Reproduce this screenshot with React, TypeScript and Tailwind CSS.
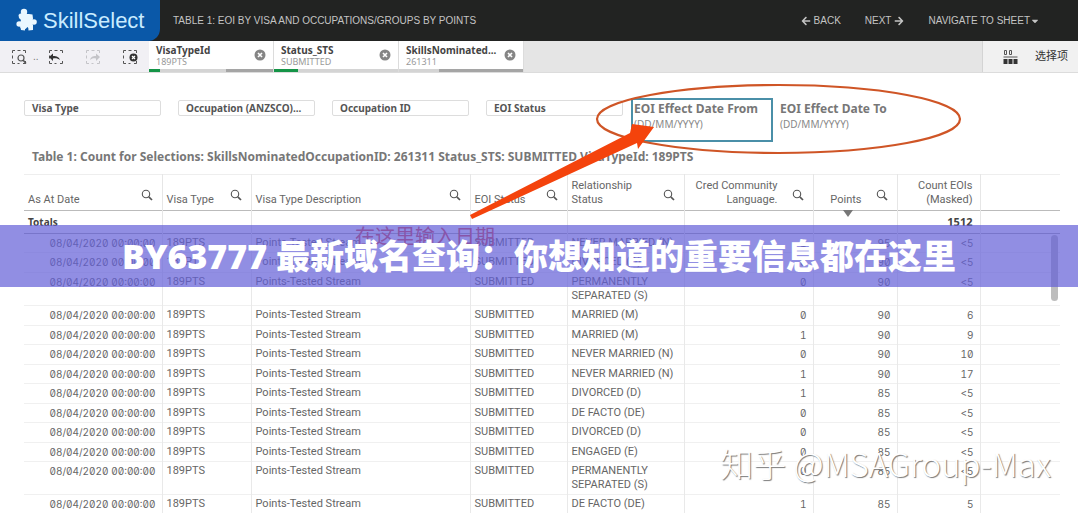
import { FaArrowLeft, FaArrowRight, FaCaretDown } from "react-icons/fa";

const FILTERS = ["Visa Type", "Occupation (ANZSCO)...", "Occupation ID", "EOI Status"];

const CHIPS = [
    { name: "VisaTypeId", value: "189PTS", green: "w-[11px]", light: "w-[66px]" },
    { name: "Status_STS", value: "SUBMITTED", green: "w-6", light: "w-[101px]" },
    { name: "SkillsNominated...", value: "261311", green: "w-0", light: "w-10" },
];

const COLUMNS = [
    { label: "As At Date", width: "w-[138px]", search: true },
    { label: "Visa Type", width: "w-[89px]", search: true },
    { label: "Visa Type Description", width: "w-[219px]", search: true },
    { label: "EOI Status", width: "w-[97px]", search: true },
    { label: "Relationship Status", width: "w-[117px]", search: true },
    { label: "Cred Community Language.", width: "w-[129px]", search: true, right: true },
    { label: "Points", width: "w-[84px]", search: true, right: true, sorted: true },
    { label: "Count EOIs (Masked)", width: "w-[83px]", search: false, right: true },
];

const ROWS = [
    ["NEVER MARRIED (N)", "1", "95", "<5"],
    ["DIVORCED (D)", "0", "90", "<5"],
    ["PERMANENTLY SEPARATED (S)", "0", "90", "<5"],
    ["MARRIED (M)", "0", "90", "6"],
    ["MARRIED (M)", "1", "90", "9"],
    ["NEVER MARRIED (N)", "0", "90", "10"],
    ["NEVER MARRIED (N)", "1", "90", "17"],
    ["DIVORCED (D)", "1", "85", "<5"],
    ["DE FACTO (DE)", "0", "85", "<5"],
    ["DIVORCED (D)", "0", "85", "<5"],
    ["ENGAGED (E)", "0", "85", "<5"],
    ["PERMANENTLY SEPARATED (S)", "0", "85", "<5"],
    ["DE FACTO (DE)", "1", "85", "5"],
];

const NUMERIC = "text-right font-['Inter',sans-serif] text-[10px] [font-feature-settings:'zero','tnum']";

function PuzzleIcon() {
    return (
        <svg viewBox="0 0 22 26" className="h-[26px] w-[22px] shrink-0 fill-[#eaf7ff]" aria-hidden="true">
            <path d="M2.500 7 4 5.500 7 6h6l3.500.5.5 4-.5 3 .5 6-4.500.5-1-1-2 2-5-1-.5-5 1-3-2-2Z" />
            <circle cx="8" cy="4" r="3.200" />
            <circle cx="18" cy="14" r="2.800" />
            <circle cx="3.200" cy="16" r="2.800" />
            <path d="M4 17h5v5.500l-4-.5ZM12 17h5v5l-4.500.5Z" />
        </svg>
    );
}

function SearchIcon() {
    return (
        <svg viewBox="0 0 12 12" className="size-3 fill-none stroke-[#555]" aria-hidden="true">
            <circle cx="5" cy="5" r="3.7" strokeWidth="1.1" />
            <path d="m7.8 7.8 3.2 3.2" strokeWidth="1.7" />
        </svg>
    );
}

function ToolIcon({ kind }: { kind: "search" | "back" | "forward" | "clear" }) {
    return (
        <svg viewBox="0 0 16 16" className={`size-4 fill-none ${kind === "forward" ? "stroke-[#c4c4c8]" : "stroke-[#555]"}`} aria-hidden="true">
            <path d="M1.5 4V1.5H4M6.5 1.5h3M12 1.5h2.500V4M1.500 6.500v3M1.500 12v2.500H4M6.500 14.500h2M12 14.500h2.500V12" />
            {kind === "search" && (
                <>
                    <circle cx="10" cy="9" r="3" strokeWidth="1.200" />
                    <path d="m12 11 3 3.500" strokeWidth="1.500" />
                </>
            )}
            {kind === "back" && <path d="m1 8 4-3.500V7c4 0 6 1 7 4-2-1.500-4-2-7-1.500V12Z" className="fill-[#333] stroke-none" />}
            {kind === "forward" && <path d="m15 8-4-3.500V7c-4 0-5 1-6 4 2-1.500 3-2 6-1.500V12Z" className="fill-[#c4c4c8] stroke-none" />}
            {kind === "clear" && (
                <>
                    <circle cx="11.500" cy="8.500" r="4" className="fill-[#333] stroke-none" />
                    <path d="m10 7 3 3m0-3-3 3" className="stroke-white" strokeWidth="1.200" />
                </>
            )}
        </svg>
    );
}

function ClearIcon() {
    return (
        <svg viewBox="0 0 12 12" className="size-3" aria-hidden="true">
            <circle cx="6" cy="6" r="5.500" fill="#858585" />
            <path d="m4 4 4 4m0-4L4 8" stroke="#fff" strokeWidth="1.600" />
        </svg>
    );
}

function TopBar() {
    return (
        <header className="flex h-[41px] shrink-0 items-stretch bg-[#222322] text-[10px] text-[#c4c4c4]">
            <a href="#home" className="flex w-[160px] items-center gap-[5px] rounded-br-xl bg-[#0a58a8] pl-4 text-[#c9ecff]">
                <PuzzleIcon />
                <span className="text-[22px] leading-6">SkillSelect</span>
            </a>
            <h1 className="flex flex-1 items-center pl-[13px]">TABLE 1: EOI BY VISA AND OCCUPATIONS/GROUPS BY POINTS</h1>
            <nav className="flex items-center gap-6 pr-[38px]">
                <button className="flex items-center gap-[3px]"><FaArrowLeft className="size-2.5" />BACK</button>
                <button className="flex items-center gap-[3px]">NEXT<FaArrowRight className="size-2.5" /></button>
                <button className="flex items-center">NAVIGATE TO SHEET<FaCaretDown className="size-2.5" /></button>
            </nav>
        </header>
    );
}

function SelectionBar() {
    return (
        <div className="flex h-8 shrink-0 border-b border-[#dcdcdc] bg-[#e5e5e5]">
            <div className="flex w-[149px] items-center bg-[#f1f0f4] pl-[11px]">
                <button aria-label="Smart search"><ToolIcon kind="search" /></button>
                <span className="w-[21px] pl-1.5 text-[10px] text-[#777]">..</span>
                <button aria-label="Step back"><ToolIcon kind="back" /></button>
                <button className="ml-[21px]" aria-label="Step forward"><ToolIcon kind="forward" /></button>
                <button className="ml-[21px]" aria-label="Clear all selections"><ToolIcon kind="clear" /></button>
            </div>
            {CHIPS.map((chip) => (
                <div key={chip.name} className="flex w-[125px] flex-col border-r border-[#dcdcdc] bg-white">
                    <div className="flex flex-1 items-center justify-between pr-[7px] pl-[7px]">
                        <div className="font-['Noto_Sans',sans-serif]">
                            <p className="text-[10px] leading-3 font-bold whitespace-nowrap text-[#444]">{chip.name}</p>
                            <p className="text-[9px] leading-[11px] text-[#999]">{chip.value}</p>
                        </div>
                        <button aria-label={`Clear ${chip.name}`}><ClearIcon /></button>
                    </div>
                    <div className="flex h-[3px] bg-[#a5a5a5]">
                        <div className={`bg-[#159447] ${chip.green}`} />
                        <div className={`bg-[#d4d4d4] ${chip.light}`} />
                    </div>
                </div>
            ))}
            <button className="ml-auto flex w-24 items-center gap-[17px] border-l border-[#d4d4d4] bg-[#f1f1f1] pl-5 text-[11px] whitespace-nowrap text-[#333]">
                <svg viewBox="0 0 15 14" className="h-3.5 w-[15px] shrink-0" aria-hidden="true">
                    <path d="M1.500.5h2v4h-2zM6.500.5h2v4h-2z" fill="none" stroke="#555" />
                    <path d="M.500 7h14" stroke="#555" />
                    <path d="M.500 9h4v5h-4zM5.500 9h4v5h-4zM10.500 9h4v5h-4z" fill="#333" />
                </svg>
                选择项
            </button>
        </div>
    );
}

function DateButton({ label, active }: { label: string; active?: boolean }) {
    return (
        <button className={`h-11 w-[142px] border-2 pl-px text-left ${active ? "border-[#4a8fa8]" : "border-transparent"}`}>
            <span className="block pt-px text-[12px] leading-4 font-bold whitespace-nowrap text-[#777]">{label}</span>
            <span className="block pb-2 text-[10px] leading-[15px] text-[#888]">(DD/MM/YYYY)</span>
        </button>
    );
}

function Filters() {
    return (
        <div className="flex items-start gap-[17px]">
            {FILTERS.map((label) => (
                <button key={label} className="mt-0.5 flex h-4 w-[137px] items-center rounded-xs border border-[#ddd] pt-px pl-[7px] text-[10px] font-bold whitespace-nowrap text-[#555]">
                    {label}
                </button>
            ))}
            <div className="-ml-[9px] flex gap-1">
                <DateButton label="EOI Effect Date From" active />
                <DateButton label="EOI Effect Date To" />
            </div>
        </div>
    );
}

function EoiTable() {
    return (
        <table className="w-full table-fixed border-collapse border-t border-[#eee] font-['Roboto',sans-serif] text-[11px] leading-[14px] text-[#666]">
            <thead>
                <tr className="h-9 border-b border-[#bbb]">
                    {COLUMNS.map((col) => (
                        <th key={col.label} className={`border-r border-[#e6e6e6] px-1 py-0 align-bottom font-normal ${col.width}`}>
                            <div className={`flex items-end justify-between pb-[3px] ${col.right ? "text-right" : "text-left"}`}>
                                <span className={`relative flex-1 ${col.right ? "pr-[3px]" : ""}`}>
                                    {col.label}
                                    {col.sorted && <span className="absolute top-[17px] right-3 border-x-[5px] border-t-[7px] border-x-transparent border-t-[#777]" />}
                                </span>
                                {col.search && (
                                    <button className="mb-1.5 w-7 shrink-0 pl-[11px]" aria-label={`Search ${col.label}`}><SearchIcon /></button>
                                )}
                            </div>
                        </th>
                    ))}
                    <th />
                </tr>
            </thead>
            <tbody>
                <tr className="h-[23px] border-b border-[#aaa] font-['Noto_Sans',sans-serif] text-[10px] font-bold text-[#444]">
                    <td className="border-r border-[#e6e6e6] px-1 py-0">Totals</td>
                    {COLUMNS.slice(1, 7).map((col) => (
                        <td key={col.label} className="border-r border-[#e6e6e6]" />
                    ))}
                    <td className="border-r border-[#e6e6e6] px-[7px] py-0 text-right text-[11px]">1512</td>
                    <td />
                </tr>
                {ROWS.map(([status, language, points, count], i) => (
                    <tr key={i} className="h-[19px] border-b border-[#f0f0f0] align-top odd:h-5 [&>td]:border-r [&>td]:border-[#e9e9e9] [&>td]:px-1 [&>td]:pt-0.5 [&>td]:pb-0.5 [&>td:last-child]:border-r-0">
                        <td className={NUMERIC}><span className="pr-0.5">08/04/2020 00:00:00</span></td>
                        <td>189PTS</td>
                        <td>Points-Tested Stream</td>
                        <td>SUBMITTED</td>
                        <td>{status}</td>
                        <td className={NUMERIC}><span className="pr-0.5">{language}</span></td>
                        <td className={NUMERIC}><span className="pr-0.5">{points}</span></td>
                        <td className={NUMERIC}><span className="pr-0.5">{count}</span></td>
                        <td />
                    </tr>
                ))}
            </tbody>
        </table>
    );
}

export default function App() {
    return (
        <div className="relative flex h-screen flex-col overflow-hidden bg-white font-['Liberation_Sans','Noto_Sans_CJK_SC',sans-serif]">
            <TopBar />
            <SelectionBar />
            <main className="flex-1 overflow-hidden pt-[25px] pr-[18px] pl-6 font-['Noto_Sans','Noto_Sans_CJK_SC',sans-serif]">
                <Filters />
                <h2 className="mt-[7px] mb-[9px] pl-2 text-[12px] leading-4 font-bold whitespace-nowrap text-[#777]">
                    Table 1: Count for Selections: SkillsNominatedOccupationID: 261311 Status_STS: SUBMITTED VisaTypeId: 189PTS
                </h2>
                <EoiTable />
            </main>

            {/* Scroll thumb */}
            <div className="absolute top-[235px] right-5 h-[66px] w-[7px] rounded-full bg-[#bdbdbd]" />

            {/* Hand-drawn notes */}
            <svg className="absolute top-0 left-0 h-[230px] w-[1078px]" viewBox="0 0 1078 230" aria-hidden="true">
                <ellipse cx="778.500" cy="119" rx="181.500" ry="34" fill="none" stroke="#cf5526" strokeWidth="2.200" />
                <path d="M470 215 630 133 632 124 654 127 638 149 637 143 472 219Z" fill="#f4430c" />
            </svg>
            <p className="absolute top-[222px] left-[355px] font-['Noto_Sans_CJK_SC',sans-serif] text-[20px] leading-7 text-[#e0403a]">在这里输入日期</p>

            {/* Watermark */}
            <p className="absolute right-[27px] bottom-7 font-['Noto_Sans_CJK_SC',sans-serif] text-[33px] leading-[44px] font-light whitespace-nowrap text-white [text-shadow:1px_1px_1px_#777]">
                知乎 @MSAGroup-Max
            </p>

            {/* Banner */}
            <div className="absolute inset-x-0 top-[225px] flex h-[62px] items-center justify-center bg-[#635ed7]/70">
                <p className="font-['Open_Sans','Noto_Sans_CJK_SC',sans-serif] text-[34px] leading-[62px] font-extrabold whitespace-nowrap text-white">
                    BY63777 最新域名查询：你想知道的重要信息都在这里
                </p>
            </div>
        </div>
    );
}
